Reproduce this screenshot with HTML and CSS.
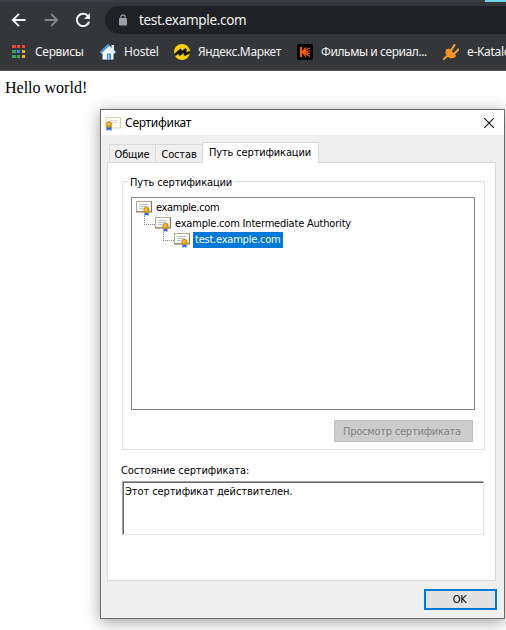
FILE: index.html
```html
<!DOCTYPE html>
<html lang="ru">
<head>
<meta charset="utf-8">
<title>test.example.com</title>
<link rel="stylesheet" href="styles.css">
</head>
<body>
<svg width="0" height="0" class="defs" aria-hidden="true">
  <symbol id="cert" viewBox="0 0 16 16">
    <rect x="0.500" y="1.500" width="15" height="10" fill="#fffdf8" stroke="#b9a78e"/>
    <path d="M0 12h15.500V1.500" stroke="#85735f" stroke-width="1.200" fill="none"/>
    <path d="M3 4.500h9M3 6.500h8M3 8.500h4" stroke="#b9c0dc" fill="none"/>
    <path d="M8.500 11.500V16l2-1.300 2 1.300v-4.500" fill="#2466dc"/>
    <circle cx="10.500" cy="10" r="2.900" fill="#e0a21a" stroke="#b57b10" stroke-width=".5"/>
    <circle cx="10" cy="9.500" r="1" fill="#f6d359"/>
  </symbol>
  <symbol id="cert-title" viewBox="0 0 16 16">
    <rect x="1" y="2.500" width="14.500" height="10.500" fill="#fffaf0" stroke="#dccfbc"/>
    <path d="M5 5.500h7M7 7.500h5" stroke="#d8dae4" fill="none"/>
    <path d="M1.500 11v5l2.500-1.500L6.500 16v-5" fill="#2466dc"/>
    <circle cx="4" cy="9.500" r="2.900" fill="#e0a21a" stroke="#b57b10" stroke-width=".5"/>
    <circle cx="3.600" cy="9" r="1" fill="#f6d359"/>
  </symbol>
</svg>
<header class="chrome">
  <div class="tabstrip"><span class="tabstrip-accent"></span></div>
  <div class="toolbar">
    <svg class="nav" viewBox="0 0 16 16"><path d="M14.500 8H2M8 1.800 1.800 8 8 14.200" fill="none" stroke="#f1f3f4" stroke-width="1.900"/></svg>
    <svg class="nav" viewBox="0 0 16 16"><path d="M1.500 8H14M8 1.800 14.200 8 8 14.200" fill="none" stroke="#85878b" stroke-width="1.900"/></svg>
    <svg class="nav" viewBox="0 0 16 16"><path d="M13.200 4.300A6.200 6.200 0 1 0 14.100 9.600" fill="none" stroke="#f1f3f4" stroke-width="2"/><path d="M15 1v6H9z" fill="#f1f3f4"/></svg>
    <div class="omnibox">
      <svg class="lock" viewBox="0 0 8 12"><path d="M1.900 5V3a2.100 2.100 0 0 1 4.200 0v2" fill="none" stroke="#9aa0a6" stroke-width="1.200"/><rect y="4" width="8" height="7.500" rx="1" fill="#9aa0a6"/></svg>
      <span class="url">test.example.com</span>
    </div>
  </div>
  <nav class="bookmarks">
    <a class="bm b1"><svg viewBox="0 0 16 16"><path d="M2 1h4v3H2zM7 1h3v3H7zM12 1h3v3h-3z" fill="#f44336"/><path d="M2 6h4v3H2zM2 11h4v3H2zM7 11h3v3H7z" fill="#34a853"/><path d="M7 6h3v3H7z" fill="#2f8df5"/><path d="M12 6h3v3h-3zM12 11h3v3h-3z" fill="#fbb005"/></svg><span>Сервисы</span></a>
    <a class="bm b2"><svg viewBox="0 0 16 16"><path d="M11.500 1h2.500v5h-2.500z" fill="#dceaf8"/><path d="M2.500 8 8 3l5.500 5v7.500h-11z" fill="#f4faff"/><path d="M1 9 8 2l7 7" fill="none" stroke="#d5ebff" stroke-width="2.600"/><path d="M.7 8.500 8 1.200l1 1" fill="none" stroke="#3e8ee4" stroke-width="2"/><path d="M7 9.500h4v6H7z" fill="#3687df"/><path d="M8 10.500h1.500v5H8z" fill="#9bd0ff"/></svg><span>Hostel</span></a>
    <a class="bm b3"><svg viewBox="0 0 16 16"><circle cx="8" cy="8" r="8" fill="#fcd20a"/><path d="M1.500 10.500 6.500 6 5.800 10.500 11.500 5.500 10.800 10.500 15 8.500" fill="none" stroke="#17140a" stroke-width="2.500" stroke-linecap="round" stroke-linejoin="round"/></svg><span>Яндекс.Маркет</span></a>
    <a class="bm b4"><svg viewBox="0 0 16 16"><rect width="16" height="16" rx="2" fill="#000"/><path d="M4 3v10" stroke="#f5610a" stroke-width="2"/><path d="M5 8l4-4.500M5 8l8-4M5 8l8-1M5 8l8 1.500M5 8l8 4.500M5 8l4 5" fill="none" stroke="#f5610a" stroke-width="1.200"/></svg><span>Фильмы и сериал...</span></a>
    <a class="bm b5"><svg viewBox="0 0 16 16"><path d="M1 15 4 12" stroke="#e99420" stroke-width="2.400" stroke-linecap="round"/><path d="M3 5.500 6 4.500l7 7-.500 1.500c-3 2-6 1.500-8-.5s-2.500-4-1.500-7z" fill="#f59423"/><path d="m8 6.500 3.500-5.500M11.500 9.500l4-4" stroke="#eda03b" stroke-width="2.200" stroke-linecap="round"/></svg><span>e-Katalog</span></a>
  </nav>
</header>
<main class="page">Hello world!</main>

<section class="dialog">
  <div class="titlebar">
    <svg class="cert"><use href="#cert-title"/></svg>
    <span class="title">Сертификат</span>
    <svg class="close" viewBox="0 0 10 10"><path d="M0 0 10 10M10 0 0 10" stroke="#111" stroke-width="1.100"/></svg>
  </div>
  <div class="content">
    <div class="tabs">
      <span class="tab t1"><span>Общие</span></span>
      <span class="tab t2"><span>Состав</span></span>
      <span class="tab active"><span>Путь сертификации</span></span>
    </div>
    <div class="panel">
      <div class="group">
        <div class="legend"><span>Путь сертификации</span></div>
        <div class="tree">
          <div class="node"><svg class="cert"><use href="#cert"/></svg><span class="name n1">example.com</span></div>
          <div class="node child1"><i class="elbow"></i><svg class="cert"><use href="#cert"/></svg><span class="name n2">example.com Intermediate Authority</span></div>
          <div class="node child2"><i class="elbow"></i><svg class="cert"><use href="#cert"/></svg><span class="name n3 selected">test.example.com</span></div>
        </div>
        <button class="view" disabled><span>Просмотр сертификата</span></button>
      </div>
      <div class="status-label"><span>Состояние сертификата:</span></div>
      <div class="status"><span>Этот сертификат действителен.</span></div>
    </div>
    <button class="ok">OK</button>
  </div>
</section>
</body>
</html>
```
FILE: styles.css
```css
* { box-sizing: border-box; }
html, body { height: 100%; }
body { margin: 0; overflow: hidden; position: relative; background: #fff; }
svg { display: block; flex: none; }
.defs { position: absolute; }

.chrome { height: 71px; background: #35363a; border-bottom: 1px solid #5b565e; overflow: hidden; font-family: "Noto Sans", "Open Sans", sans-serif; }
.tabstrip { height: 2px; background: #3d3e43; display: flex; justify-content: flex-end; }
.tabstrip-accent { width: 21px; background: #6fd3e8; }
.toolbar { height: 32px; padding: 4px 0 0 11px; display: flex; gap: 16px; align-items: center; }
.nav { width: 16px; height: 16px; }
.omnibox { flex: 1; height: 28px; margin-left: -2px; background: #202124; border-radius: 14px 0 0 14px; display: flex; align-items: center; padding-left: 14px; gap: 12px; }
.lock { width: 8px; height: 12px; }
.url { color: #f1f3f4; font-size: 13.5px; letter-spacing: -.32px; line-height: 20px; white-space: nowrap; }
.bookmarks { display: flex; height: 36px; align-items: center; padding-left: 10px; }
.bm { display: flex; flex: none; align-items: center; gap: 8px; color: #f1f3f4; font-size: 12px; letter-spacing: -.33px; line-height: 16px; white-space: nowrap; }
.bm svg { width: 16px; height: 16px; }
.b1 { width: 90px; gap: 9px; }
.b2 { width: 74px; letter-spacing: -.25px; }
.b3 { width: 123px; }
.b4 { width: 146px; letter-spacing: -.42px; }

.page { padding: 8px 5px; font: 16px/18px "Liberation Serif", serif; color: #000; }

.dialog { position: absolute; left: 100px; top: 109px; width: 405px; height: 510px; border: 1px solid #6b6b6b; background: #f0f0f0; box-shadow: 0 3px 15px rgba(0,0,0,.38); font: 11px/14px "DejaVu Sans Condensed", "DejaVu Sans", sans-serif; font-stretch: condensed; letter-spacing: -.15px; color: #000; white-space: nowrap; }
.titlebar { height: 25px; background: #fff; display: flex; align-items: center; padding: 0 10px 0 4px; }
.cert { width: 16px; height: 16px; }
.title { font: 12px/16px "Noto Sans", sans-serif; letter-spacing: -.3px; margin-left: 4px; flex: 1; }
.close { width: 10px; height: 10px; }
.content { padding: 7px 7px 0 6px; display: flex; flex-direction: column; }
.tabs { display: flex; align-items: flex-end; height: 21px; margin: 0 0 -1px 2px; z-index: 1; }
.tab { height: 18px; border: 1px solid #d9d9d9; border-bottom: 0; display: flex; align-items: center; justify-content: center; margin-bottom: 1px; }
.t1 { width: 47px; padding-top: 2px; padding-right: 1px; }
.t2 { width: 47px; border-left: 0; padding-top: 2px; }
.active { width: 117px; height: 21px; margin-bottom: 0; background: #fff; margin-left: -1px; padding-right: 1px; }
.panel { height: 419px; margin-right: 1px; border: 1px solid #d9d9d9; background: #fff; padding: 18px 11px 0 14px; }
.group { height: 269px; width: 363px; border: 1px solid #dcdcdc; padding: 0 9px 0 8px; display: flex; flex-direction: column; }
.legend { height: 15px; margin-top: -6px; display: flex; }
.legend span { background: #fff; margin-left: -3px; padding: 0 2px; }
.tree { height: 213px; margin-top: 6px; border: 1px solid #828790; padding: 2px 4px; width: 344px; }
.node { display: flex; height: 16px; align-items: center; }
.name { margin-left: 2px; padding: 0 2px; height: 16px; line-height: 16px; }
.n1 { letter-spacing: -.32px; }
.n2 { letter-spacing: -.2px; }
.n3 { margin-left: 3px; letter-spacing: -.22px; }
.child1 { padding-left: 8px; }
.child2 { padding-left: 27px; }
.elbow { width: 11px; height: 9px; border: 1px dotted #808080; border-width: 0 0 1px 1px; align-self: flex-start; }
.selected { background: #0078d7; color: #fff; }
button { font: inherit; letter-spacing: inherit; padding: 0; border-radius: 0; display: flex; align-items: center; justify-content: center; }
.view { width: 139px; height: 22px; margin-top: 10px; align-self: flex-end; margin-right: 2px; padding: 1px 3px 0 0; background: #ccc; border: 1px solid #bfbfbf; color: #838383; letter-spacing: -.24px; }
.status-label { margin: 14px 0 0 -1px; height: 14px; letter-spacing: -.1px; }
.status { margin-top: 3px; width: 362px; height: 54px; border: 1px solid; border-color: #a0a0a0 #e3e3e3 #e3e3e3 #a0a0a0; box-shadow: inset 1px 1px #696969; padding: 3px 2px; letter-spacing: -.1px; }
.ok { width: 73px; height: 21px; margin-top: 8px; align-self: flex-end; border: 2px solid #0078d7; background: #e1e1e1; color: #000; padding: 1px 2px 0 0; letter-spacing: -.4px; }
```
